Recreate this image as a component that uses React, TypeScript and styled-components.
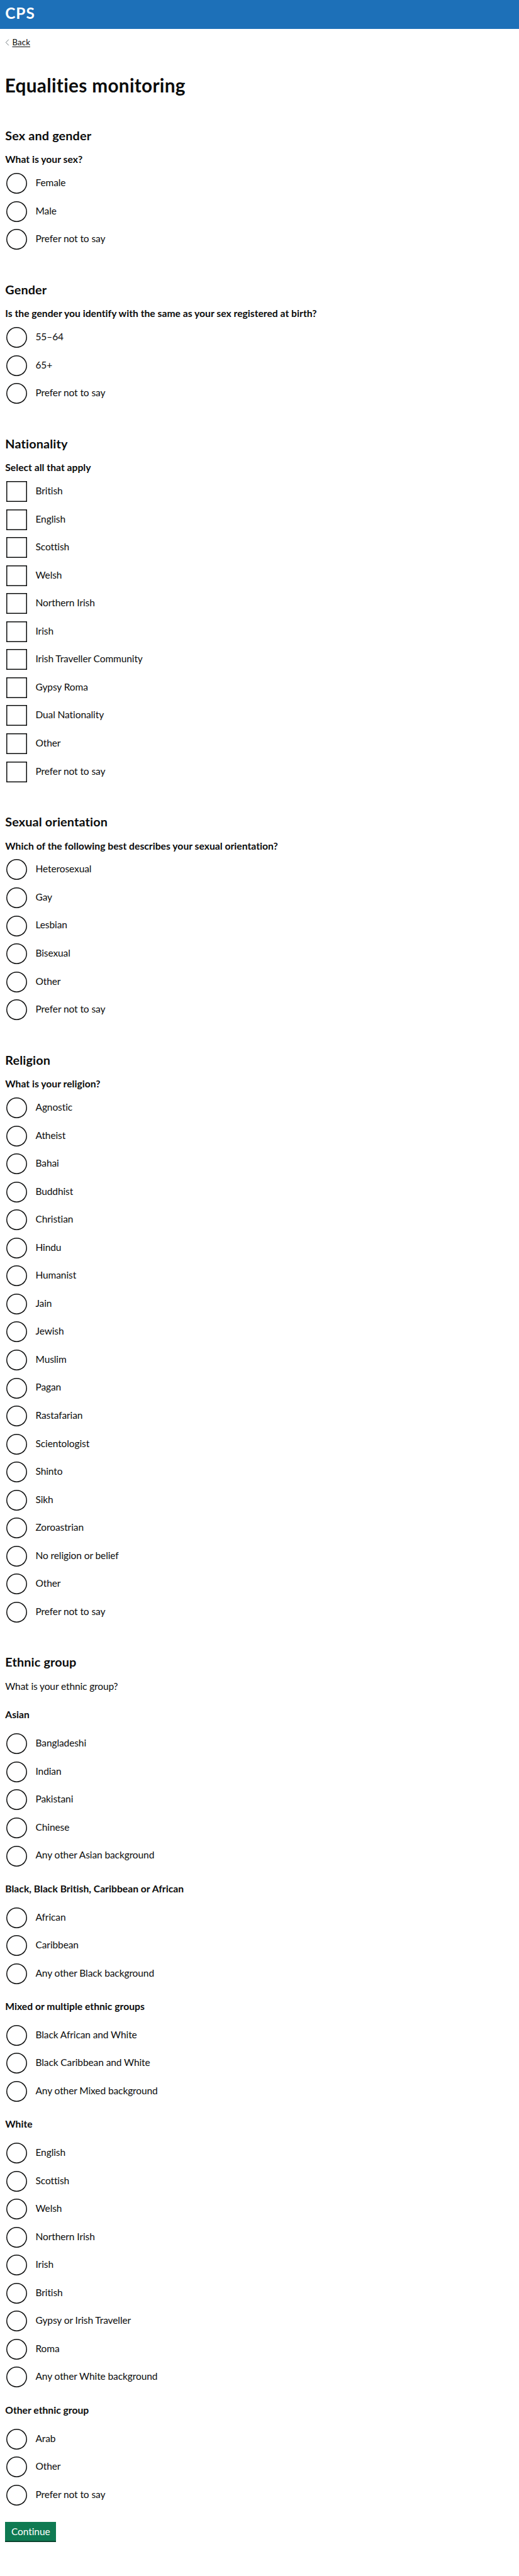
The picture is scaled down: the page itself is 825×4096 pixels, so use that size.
import React from "react";
import styled, { createGlobalStyle } from "styled-components";

const GlobalStyle = createGlobalStyle`
  * {
    box-sizing: border-box;
  }

  body {
    margin: 0;
    background: #ffffff;
    color: #0b0c0c;
    font-family: Lato, "Liberation Sans", sans-serif;
    -webkit-font-smoothing: antialiased;
  }
`;

const Page = styled.div`
  min-height: 4096px;
`;

const Header = styled.header`
  height: 46.4px;
  padding: 8.9px 8.25px 0;
  background-color: #1d70b8;
`;

const ServiceName = styled.a`
  display: block;
  color: #ffffff;
  font-size: 24.4px;
  font-weight: 700;
  line-height: 24.75px;
  letter-spacing: 0.95px;
  text-decoration: none;
`;

const Main = styled.main`
  display: flex;
  flex-direction: column;
  align-items: flex-start;
  padding: 12.5px 8.25px 0;
`;

const BackLink = styled.a`
  display: flex;
  align-items: center;
  gap: 4.2px;
  height: 16.5px;
  color: #0b0c0c;
  font-size: 13.2px;
  line-height: 16.5px;
  letter-spacing: 0.14px;
  text-decoration: underline;
  text-decoration-thickness: 1px;
  text-underline-offset: 2px;
`;

const BackArrow = styled.svg`
  width: 7px;
  height: 11px;
`;

const Title = styled.h1`
  margin: 43.6px 0 50.7px -0.6px;
  font-size: 29.7px;
  font-weight: 700;
  line-height: 33px;
  letter-spacing: 0.34px;
`;

const Section = styled.section`
  margin-bottom: 40.5px;

  &:last-of-type {
    margin-bottom: 1.1px;
  }
`;

const SectionTitle = styled.h2`
  margin: 0 0 15.9px;
  font-size: 19.8px;
  font-weight: 700;
  line-height: 24.75px;
  letter-spacing: 0.16px;
`;

const Legend = styled.h3<{ $spaced?: boolean }>`
  margin: 0 0 ${(props) => (props.$spaced ? "17.8px" : "9.6px")};
  font-size: 15.675px;
  font-weight: 700;
  line-height: 20.6px;
  letter-spacing: 0.02px;
`;

const Intro = styled.p`
  margin: 0 0 24.8px;
  font-size: 15.5px;
  line-height: 20.6px;
  letter-spacing: -0.12px;
`;

const Group = styled.div`
  display: flow-root;
  margin-bottom: 15.2px;
`;

const Item = styled.label`
  display: flex;
  align-items: center;
  gap: 13.6px;
  height: 36.3px;
  margin-bottom: 8.25px;
  padding-left: 1.65px;
`;

const Control = styled.input`
  appearance: none;
  flex: none;
  width: 33px;
  height: 33px;
  margin: 0;
  border-radius: ${(props) => (props.type === "radio" ? "50%" : "0")};
  box-shadow: inset 0 0 0 1.5px #0b0c0c;
`;

const ItemText = styled.span`
  padding-bottom: 2.5px;
  font-size: 15.5px;
  line-height: 20.6px;
  letter-spacing: -0.1px;
`;

const Button = styled.button`
  width: 81px;
  height: 32.6px;
  padding: 0 0 3.1px;
  border: 0;
  background-color: #0f7a52;
  box-shadow: inset 0 -1.65px 0 #083d29;
  color: #ffffff;
  font-family: inherit;
  font-size: 15.5px;
  letter-spacing: -0.08px;
`;

type OptionsProps = {
  name: string;
  type?: "radio" | "checkbox";
  options: string[];
};

function Options({ name, type = "radio", options }: OptionsProps) {
  return (
    <>
      {options.map((option) => (
        <Item key={option}>
          <Control type={type} name={name} value={option} />
          <ItemText>{option}</ItemText>
        </Item>
      ))}
    </>
  );
}

type Question = OptionsProps & { title: string; legend: string };

const questions: Question[] = [
  {
    name: "sex",
    title: "Sex and gender",
    legend: "What is your sex?",
    options: ["Female", "Male", "Prefer not to say"],
  },
  {
    name: "gender",
    title: "Gender",
    legend:
      "Is the gender you identify with the same as your sex registered at birth?",
    options: ["55–64", "65+", "Prefer not to say"],
  },
  {
    name: "nationality",
    type: "checkbox",
    title: "Nationality",
    legend: "Select all that apply",
    options: [
      "British",
      "English",
      "Scottish",
      "Welsh",
      "Northern Irish",
      "Irish",
      "Irish Traveller Community",
      "Gypsy Roma",
      "Dual Nationality",
      "Other",
      "Prefer not to say",
    ],
  },
  {
    name: "orientation",
    title: "Sexual orientation",
    legend: "Which of the following best describes your sexual orientation?",
    options: [
      "Heterosexual",
      "Gay",
      "Lesbian",
      "Bisexual",
      "Other",
      "Prefer not to say",
    ],
  },
  {
    name: "religion",
    title: "Religion",
    legend: "What is your religion?",
    options: [
      "Agnostic",
      "Atheist",
      "Bahai",
      "Buddhist",
      "Christian",
      "Hindu",
      "Humanist",
      "Jain",
      "Jewish",
      "Muslim",
      "Pagan",
      "Rastafarian",
      "Scientologist",
      "Shinto",
      "Sikh",
      "Zoroastrian",
      "No religion or belief",
      "Other",
      "Prefer not to say",
    ],
  },
];

const ethnicGroups = [
  {
    title: "Asian",
    options: [
      "Bangladeshi",
      "Indian",
      "Pakistani",
      "Chinese",
      "Any other Asian background",
    ],
  },
  {
    title: "Black, Black British, Caribbean or African",
    options: ["African", "Caribbean", "Any other Black background"],
  },
  {
    title: "Mixed or multiple ethnic groups",
    options: [
      "Black African and White",
      "Black Caribbean and White",
      "Any other Mixed background",
    ],
  },
  {
    title: "White",
    options: [
      "English",
      "Scottish",
      "Welsh",
      "Northern Irish",
      "Irish",
      "British",
      "Gypsy or Irish Traveller",
      "Roma",
      "Any other White background",
    ],
  },
  {
    title: "Other ethnic group",
    options: ["Arab", "Other", "Prefer not to say"],
  },
];

export default function App() {
  return (
    <Page>
      <GlobalStyle />
      <Header>
        <ServiceName>CPS</ServiceName>
      </Header>
      <Main>
        <BackLink>
          <BackArrow
            viewBox="0 0 7 11"
            fill="none"
            stroke="#505a5f"
            strokeWidth="0.8"
          >
            <path d="M5.9 0.8 L1.3 5.5 L5.9 10.2" />
          </BackArrow>
          Back
        </BackLink>
        <Title>Equalities monitoring</Title>

        {questions.map(({ title, legend, ...rest }) => (
          <Section key={title}>
            <SectionTitle>{title}</SectionTitle>
            <Legend>{legend}</Legend>
            <Options {...rest} />
          </Section>
        ))}

        <Section>
          <SectionTitle>Ethnic group</SectionTitle>
          <Intro>What is your ethnic group?</Intro>
          {ethnicGroups.map((group) => (
            <Group key={group.title}>
              <Legend $spaced>{group.title}</Legend>
              <Options name="ethnicity" options={group.options} />
            </Group>
          ))}
        </Section>

        <Button type="button">Continue</Button>
      </Main>
    </Page>
  );
}
